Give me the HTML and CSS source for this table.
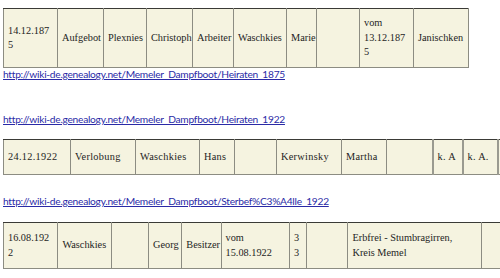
FILE: index.html
```html
<!DOCTYPE html>
<html lang="de">
<head>
<meta charset="utf-8">
<title>Memeler Dampfboot</title>
<link rel="stylesheet" href="styles.css">
</head>
<body>
<div class="page">
  <table class="rec rec1">
    <colgroup><col class="c1"><col class="c2"><col class="c3"><col class="c4"><col class="c5"><col class="c6"><col class="c7"><col class="c8"><col class="c9"><col class="c10"></colgroup>
    <tr>
      <td>14.12.187<br>5</td>
      <td class="dk">Aufgebot</td>
      <td class="dk">Plexnies</td>
      <td class="dk">Christoph</td>
      <td class="dk">Arbeiter</td>
      <td class="dk">Waschkies</td>
      <td>Marie</td>
      <td></td>
      <td class="dk">vom<br>13.12.187<br>5</td>
      <td class="dk">Janischken</td>
    </tr>
  </table>
  <a class="src src1" href="#">http://wiki-de.genealogy.net/Memeler_Dampfboot/Heiraten_1875</a>

  <a class="src src2" href="#">http://wiki-de.genealogy.net/Memeler_Dampfboot/Heiraten_1922</a>
  <table class="rec rec2">
    <colgroup><col class="c1"><col class="c2"><col class="c3"><col class="c4"><col class="c5"><col class="c6"><col class="c7"><col class="c8"><col class="c9"><col class="c10"><col class="c11"></colgroup>
    <tr>
      <td>24.12.1922</td>
      <td class="dk">Verlobung</td>
      <td class="dk">Waschkies</td>
      <td class="dk">Hans</td>
      <td></td>
      <td class="dk">Kerwinsky</td>
      <td>Martha</td>
      <td></td>
      <td class="th">k. A</td>
      <td class="th">k. A.</td>
      <td class="th"></td>
    </tr>
  </table>

  <a class="src src3" href="#">http://wiki-de.genealogy.net/Memeler_Dampfboot/Sterbef%C3%A4lle_1922</a>
  <table class="rec rec3">
    <colgroup><col class="c1"><col class="c2"><col class="c3"><col class="c4"><col class="c5"><col class="c6"><col class="c7"><col class="c8"><col class="c9"><col class="c10"></colgroup>
    <tr>
      <td>16.08.192<br>2</td>
      <td class="dk">Waschkies</td>
      <td></td>
      <td>Georg</td>
      <td>Besitzer</td>
      <td>vom<br>15.08.1922</td>
      <td class="dk">3<br>3</td>
      <td></td>
      <td>Erbfrei - Stumbragirren,<br>Kreis Memel</td>
      <td></td>
    </tr>
  </table>
</div>
</body>
</html>
```

FILE: styles.css
```css
html, body {
  margin: 0;
  padding: 0;
  background: #ffffff;
  overflow: hidden;
}

.page {
  padding: 8px 0 0 3px;
  font-family: "Liberation Serif", "Times New Roman", serif;
  color: #1e1e1e;
}

.rec {
  border-collapse: collapse;
  table-layout: fixed;
  font-size: 10.3px;
  line-height: 14.5px;
}

.rec td {
  background: #f5f3e0;
  border: 1px solid #8c8c82;
  border-top-color: #3a3a36;
  padding: 0 2px 0 4px;
  vertical-align: middle;
  white-space: nowrap;
}

.rec td.dk {
  border-left-color: #2a2a28;
}

.rec td.th {
  border-left: 2px solid #9a9a90;
}

.rec1 { width: 466px; }
.rec1 tr { height: 59px; }
.rec1 .c1 { width: 54px; }
.rec1 .c2 { width: 46px; }
.rec1 .c3 { width: 43px; }
.rec1 .c4 { width: 46px; }
.rec1 .c5 { width: 41px; }
.rec1 .c6 { width: 53px; }
.rec1 .c7 { width: 30px; }
.rec1 .c8 { width: 43px; }
.rec1 .c9 { width: 54px; }
.rec1 .c10 { width: 55px; }

.rec2 { width: 540px; letter-spacing: 0.3px; }
.rec2 tr { height: 35px; }
.rec2 .c1 { width: 67px; }
.rec2 .c2 { width: 65px; }
.rec2 .c3 { width: 64px; }
.rec2 .c4 { width: 35px; }
.rec2 .c5 { width: 42px; }
.rec2 .c6 { width: 65px; }
.rec2 .c7 { width: 45px; }
.rec2 .c8 { width: 46px; }
.rec2 .c9 { width: 30px; }
.rec2 .c10 { width: 35px; }
.rec2 .c11 { width: 46px; }

.rec3 { width: 540px; }
.rec3 tr { height: 46px; }
.rec3 .c1 { width: 54px; }
.rec3 .c2 { width: 53px; }
.rec3 .c3 { width: 37px; }
.rec3 .c4 { width: 33px; }
.rec3 .c5 { width: 39px; }
.rec3 .c6 { width: 68px; }
.rec3 .c7 { width: 17px; }
.rec3 .c8 { width: 41px; }
.rec3 .c9 { width: 133px; }
.rec3 .c10 { width: 60px; }

.src {
  display: block;
  width: max-content;
  font-family: Lato, "Liberation Sans", sans-serif;
  font-size: 10.2px;
  letter-spacing: -0.26px;
  line-height: 12px;
  color: #2a2aa6;
  text-decoration: underline;
  text-underline-offset: 1px;
}

.src1 { margin-top: 0; }
.src2 { margin-top: 33px; margin-bottom: 14px; }
.src3 { margin-top: 20px; margin-bottom: 15px; }
```
